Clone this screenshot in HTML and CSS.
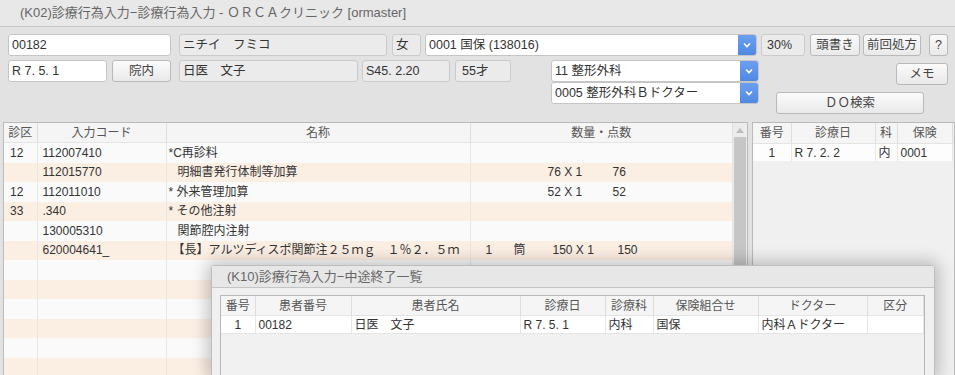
FILE: index.html
```html
<!DOCTYPE html>
<html lang="ja">
<head>
    <meta charset="UTF-8">
    <title>(K02)診療行為入力</title>
    <link rel="stylesheet" href="styles.css">
</head>
<body>
    <div class="titlebar">(K02)診療行為入力−診療行為入力 - ＯＲＣＡクリニック [ormaster]</div>

    <div class="form">
        <div class="row">
            <div class="field f-id">00182</div>
            <div class="field ro f-kana">ニチイ　フミコ</div>
            <div class="field ro f-sex">女</div>
            <div class="combo f-ins">
                <span class="combo-text">0001 国保 (138016)</span>
                <span class="combo-btn"><svg width="8" height="6" viewBox="0 0 8 6"><polyline points="1,1.5 4,4.5 7,1.5" fill="none" stroke="#fff" stroke-width="1.6"/></svg></span>
            </div>
            <div class="field ro f-rate">30%</div>
            <button class="btn f-head">頭書き</button>
            <button class="btn f-prev">前回処方</button>
            <button class="btn f-help">?</button>
        </div>

        <div class="lower">
            <div class="row">
                <div class="field f-date">R 7. 5. 1</div>
                <button class="btn f-in">院内</button>
                <div class="field ro f-name">日医　文子</div>
                <div class="field ro f-dob">S45. 2.20</div>
                <div class="field ro f-age">55才</div>
            </div>
            <div class="combos">
                <div class="combo">
                    <span class="combo-text">11 整形外科</span>
                    <span class="combo-btn"><svg width="8" height="6" viewBox="0 0 8 6"><polyline points="1,1.5 4,4.5 7,1.5" fill="none" stroke="#fff" stroke-width="1.6"/></svg></span>
                </div>
                <div class="combo">
                    <span class="combo-text">0005 整形外科Ｂドクター</span>
                    <span class="combo-btn"><svg width="8" height="6" viewBox="0 0 8 6"><polyline points="1,1.5 4,4.5 7,1.5" fill="none" stroke="#fff" stroke-width="1.6"/></svg></span>
                </div>
            </div>
            <div class="side">
                <button class="btn f-memo">メモ</button>
                <button class="btn f-do">ＤＯ検索</button>
            </div>
        </div>
    </div>

    <div class="main">
        <div class="panel panel-left">
            <table class="grid">
                <colgroup>
                    <col style="width:33px"><col style="width:129px"><col style="width:304px"><col>
                </colgroup>
                <thead>
                    <tr><th>診区</th><th>入力コード</th><th>名称</th><th>数量・点数</th></tr>
                </thead>
                <tbody>
                    <tr><td>12</td><td>112007410</td><td class="nm">*C再診料</td><td></td></tr>
                    <tr class="alt"><td></td><td>112015770</td><td class="nm sub">明細書発行体制等加算</td><td class="qty"><span class="q-calc">76 X 1</span><span>76</span></td></tr>
                    <tr><td>12</td><td>112011010</td><td class="nm">* 外来管理加算</td><td class="qty"><span class="q-calc">52 X 1</span><span>52</span></td></tr>
                    <tr class="alt"><td>33</td><td>.340</td><td class="nm">* その他注射</td><td></td></tr>
                    <tr><td></td><td>130005310</td><td class="nm sub">関節腔内注射</td><td></td></tr>
                    <tr class="alt"><td></td><td>620004641_</td><td class="nm br"><div class="clip">【長】アルツディスポ関節注２５ｍｇ　１％２．５ｍ</div></td><td class="qty"><span class="q-num">1</span><span class="q-unit">筒</span><span class="q-calc">150 X 1</span><span>150</span></td></tr>
                    <tr><td></td><td></td><td></td><td></td></tr>
                    <tr class="alt"><td></td><td></td><td></td><td></td></tr>
                    <tr><td></td><td></td><td></td><td></td></tr>
                    <tr class="alt"><td></td><td></td><td></td><td></td></tr>
                    <tr><td></td><td></td><td></td><td></td></tr>
                    <tr class="alt"><td></td><td></td><td></td><td></td></tr>
                </tbody>
            </table>
            <div class="scrollbar">
                <div class="scroll-up"><svg width="8" height="5" viewBox="0 0 8 5"><polygon points="0,5 4,0 8,5" fill="#bcbcbc"/></svg></div>
                <div class="scroll-thumb"></div>
            </div>
        </div>

        <div class="panel panel-right">
            <table class="grid grid-small">
                <colgroup>
                    <col style="width:38px"><col style="width:84px"><col style="width:22px"><col>
                </colgroup>
                <thead>
                    <tr><th>番号</th><th>診療日</th><th>科</th><th>保険</th></tr>
                </thead>
                <tbody>
                    <tr><td class="c">1</td><td>R 7. 2. 2</td><td>内</td><td>0001</td></tr>
                </tbody>
            </table>
        </div>
    </div>

    <div class="dialog">
        <div class="dialog-title">(K10)診療行為入力−中途終了一覧</div>
        <div class="dialog-body">
            <table class="grid grid-dialog">
                <colgroup>
                    <col style="width:34px"><col style="width:96px"><col style="width:169px"><col style="width:85px">
                    <col style="width:48px"><col style="width:105px"><col style="width:109px"><col>
                </colgroup>
                <thead>
                    <tr><th>番号</th><th>患者番号</th><th>患者氏名</th><th>診療日</th><th>診療科</th><th>保険組合せ</th><th>ドクター</th><th>区分</th></tr>
                </thead>
                <tbody>
                    <tr><td class="c">1</td><td>00182</td><td>日医　文子</td><td>R 7. 5. 1</td><td>内科</td><td>国保</td><td>内科Ａドクター</td><td></td></tr>
                </tbody>
            </table>
        </div>
    </div>
</body>
</html>
```

FILE: styles.css
```css
html, body {
    margin: 0;
    height: 100%;
    overflow: hidden;
}
body {
    position: relative;
    background: #e2e2e2;
    font-family: "Liberation Sans", "Noto Sans CJK JP", sans-serif;
    font-size: 12px;
    color: #333;
}
.titlebar {
    height: 26px;
    line-height: 26px;
    padding-left: 20px;
    background: #e8e8e8;
    border-bottom: 1px solid #c9c9c9;
    color: #666;
    font-size: 13px;
}
.form {
    padding: 7px 0 0 8px;
}
.row {
    display: flex;
    align-items: flex-start;
}
.field, .btn, .combo {
    box-sizing: border-box;
    height: 22px;
    border: 1px solid #c5c5c5;
    border-radius: 3px;
    background: #fff;
    font-family: inherit;
    font-size: 12.5px;
    color: #333;
    line-height: 20px;
    white-space: nowrap;
    overflow: hidden;
}
.field {
    padding-left: 3px;
}
.field.ro {
    background: #ebebeb;
    border-color: #cbcbcb;
}
.btn {
    padding: 0;
    text-align: center;
    background: linear-gradient(#fbfbfb, #e9e9e9);
    border-color: #b9b9b9;
    color: #444;
}
.combo {
    display: flex;
    padding: 0;
    width: 208px;
}
.combo-text {
    flex: 1;
    padding-left: 3px;
}
.combo-btn {
    width: 18px;
    display: flex;
    align-items: center;
    justify-content: center;
    background: linear-gradient(#6c9ff0, #5088e2);
}

.f-id { width: 163px; }
.f-kana { width: 208px; margin-left: 8px; }
.f-sex { width: 29px; margin-left: 5px; }
.f-ins { width: 332px; margin-left: 4px; }
.f-rate { width: 44px; margin-left: 4px; padding-left: 5px; }
.f-head { width: 50px; margin-left: 5px; }
.f-prev { width: 58px; margin-left: 3px; }
.f-help { width: 19px; margin-left: 8px; }

.lower {
    display: flex;
    margin-top: 4px;
}
.f-date { width: 99px; }
.f-in { width: 59px; margin-left: 5px; }
.f-name { width: 179px; margin-left: 8px; }
.f-dob { width: 88px; margin-left: 4px; }
.f-age { width: 56px; margin-left: 5px; padding-left: 6px; }

.combos {
    margin-left: 40px;
    display: flex;
    flex-direction: column;
}
.side {
    margin-left: 17px;
    width: 172px;
    display: flex;
    flex-direction: column;
    align-items: flex-end;
}
.f-memo { width: 52px; margin-top: 3px; }
.f-do { width: 148px; margin-top: 7px; align-self: flex-start; }

.main {
    display: flex;
    margin-top: 8px;
    padding-left: 3px;
    gap: 4px;
}
.panel {
    box-sizing: border-box;
    height: 253px;
    border: 1px solid #bababa;
    border-bottom: none;
    background: #f0f0f0;
}
.panel-left {
    width: 745px;
    display: flex;
    overflow: hidden;
}
.panel-right {
    width: 203px;
}
.grid {
    border-collapse: collapse;
    table-layout: fixed;
    width: 729px;
}
.grid th {
    height: 19px;
    padding: 0;
    background: #f5f5f5;
    border-right: 1px solid #dedede;
    border-bottom: 1px solid #e4e4e4;
    font-weight: normal;
    color: #555;
    font-size: 12px;
    line-height: 16px;
}
.grid td {
    height: 19.5px;
    padding: 0 0 0 5px;
    background: #fafafa;
    border-right: 1px solid #e6e6e6;
    white-space: nowrap;
    overflow: hidden;
    line-height: 16px;
}
.grid td:first-child {
    padding-left: 6px;
}
.grid tr.alt td {
    background: #fbeee3;
}
.grid td.nm {
    padding-left: 2px;
}
.grid td.sub {
    padding-left: 11px;
}
.grid td.br {
    padding-left: 6px;
}
.clip {
    overflow: hidden;
    white-space: nowrap;
}
.grid td.qty {
    padding-left: 0;
}
.q-num {
    display: inline-block;
    margin-left: 15px;
    width: 28px;
}
.q-unit {
    display: inline-block;
    width: 39px;
}
.q-calc {
    display: inline-block;
    width: 65px;
}
.q-calc:first-child {
    margin-left: 77px;
}
.grid td.c {
    text-align: center;
    padding-left: 0;
}

.scrollbar {
    width: 14px;
    flex-shrink: 0;
    display: flex;
    flex-direction: column;
    background: #ececec;
}
.scroll-up {
    height: 14px;
    display: flex;
    align-items: center;
    justify-content: center;
}
.scroll-thumb {
    flex: 1;
    margin: 0 1px;
    background: #c6c6c6;
}

.grid-small {
    width: 200px;
}
.grid-small th {
    height: 20px;
}
.grid-small td {
    height: 17px;
    padding-left: 3px;
    background: #fdfdfd;
}

.dialog {
    position: absolute;
    left: 211px;
    top: 265px;
    width: 724px;
    height: 110px;
    box-sizing: border-box;
    border: 1px solid #bdbdbd;
    border-bottom: none;
    border-radius: 4px 4px 0 0;
    background: #f0f0f0;
    box-shadow: 0 0 16px 4px rgba(0, 0, 0, 0.22);
}
.dialog-title {
    height: 21px;
    line-height: 21px;
    padding-left: 15px;
    background: #e7e7e7;
    border-bottom: 1px solid #c4c4c4;
    color: #666;
    font-size: 13px;
}
.dialog-body {
    margin: 7px 0 0 8px;
    width: 705px;
    height: 81px;
    box-sizing: border-box;
    border: 1px solid #b8b8b8;
    border-bottom: none;
    background: #f1f1f1;
}
.grid-dialog {
    width: 703px;
}
.grid-dialog th {
    height: 19px;
}
.grid-dialog td {
    height: 17px;
    padding-left: 3px;
    background: #fff;
    border-bottom: 1px solid #e4e4e4;
}
```
